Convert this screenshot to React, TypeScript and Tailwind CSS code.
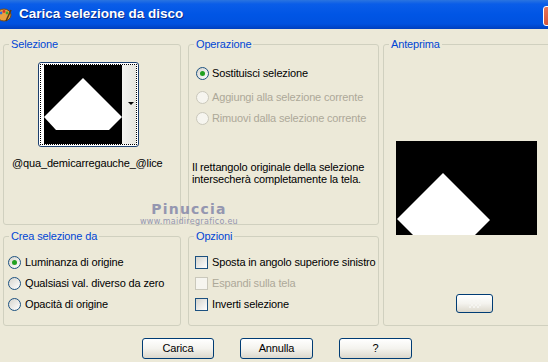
import type { ReactNode } from 'react';

const font = { fontFamily: '"Liberation Sans", Arial, sans-serif' };

function Radio({ checked, disabled }: { checked?: boolean; disabled?: boolean }) {
  return (
    <span
      className={`w-[13px] h-[13px] shrink-0 rounded-full border flex items-center justify-center ${
        disabled
          ? 'border-[#CAC8BB] bg-[#F6F5EF]'
          : 'border-[#1C5180] bg-linear-to-br from-[#D6D5CE] to-white'
      }`}
    >
      {checked && <span className="w-[5px] h-[5px] rounded-full bg-[#21A121]" />}
    </span>
  );
}

function Check({ disabled }: { disabled?: boolean }) {
  return (
    <span
      className={`w-[13px] h-[13px] shrink-0 border ${
        disabled
          ? 'border-[#CAC8BB] bg-[#F6F5EF]'
          : 'border-[#1C5180] bg-linear-to-br from-[#D6D5CE] to-white'
      }`}
    />
  );
}

function Group({ label, className, children }: { label: string; className: string; children?: ReactNode }) {
  return (
    <div className={`relative border border-[#D0D0BF] rounded-[3px] ${className}`}>
      <span className="absolute -top-[8px] left-[5px] px-[2px] bg-[#ECE9D8] text-[#0046D5] text-[11px] leading-[14px] whitespace-nowrap">
        {label}
      </span>
      {children}
    </div>
  );
}

function XpButton({ children, className }: { children?: ReactNode; className: string }) {
  return (
    <button className={`rounded-[3px] border border-[#003C74] bg-linear-to-b from-white via-[#F4F3EE] to-[#DCD8CC] text-[11px] text-black flex items-center justify-center ${className}`}>
      {children}
    </button>
  );
}

export default function App() {
  return (
    <div className="w-[548px] h-[362px] overflow-hidden bg-[#ECE9D8] relative tracking-[-0.15px]" style={font}>
      {/* title bar */}
      <div className="h-[29px] flex items-center overflow-hidden bg-[linear-gradient(180deg,#2A74E0_0%,#0A5DE8_14%,#0055E5_50%,#0052E0_82%,#0040BE_100%)]">
        <svg width="14" height="16" viewBox="0 0 14 16" className="ml-[-2px] shrink-0">
          <ellipse cx="6" cy="8" rx="7" ry="6" fill="#E8A040" stroke="#7A4A10" strokeWidth="1" />
          <circle cx="3" cy="6" r="1.4" fill="#2B6DD8" />
          <circle cx="6" cy="4.5" r="1.4" fill="#D8302B" />
          <circle cx="9" cy="6" r="1.4" fill="#3AA93A" />
          <path d="M8 14 L13 3" stroke="#5A3A10" strokeWidth="1.5" />
        </svg>
        <span
          className="ml-[7px] text-white font-bold text-[13.5px] tracking-[0px] [text-shadow:1px_1px_0_#0A2A8A]"
          style={font}
        >
          Carica selezione da disco
        </span>
        <div className="ml-auto mr-[-17px] w-[22px] h-[20px] mt-[3px] shrink-0 rounded-[3px] border border-white bg-linear-to-br from-[#E8765A] to-[#C4371C] flex items-center justify-center">
          <svg width="10" height="10" viewBox="0 0 10 10">
            <path d="M1 1 L9 9 M9 1 L1 9" stroke="white" strokeWidth="2" />
          </svg>
        </div>
      </div>

      {/* body */}
      <div className="flex pt-[15px] pl-[3px]">
        <div className="grid grid-cols-[178px_191px] grid-rows-[181px_90px] gap-x-[7px] gap-y-[11px] shrink-0">
          <Group label="Selezione" className="">
            <div className="ml-[34px] mt-[17px] w-[101px] h-[85px] rounded-[3px] border border-[#1C3F6E] bg-white p-[1px]">
              <div className="w-full h-full border border-dotted border-black flex items-center pl-[3px]">
                <svg width="78" height="79" viewBox="0 0 78 79" className="bg-black">
                  <polygon points="39,13 0,52 12,65 65,65 78,52" fill="white" />
                </svg>
                <div className="flex-1 h-full bg-linear-to-r from-[#F4F4F0] to-[#E6E6E0] relative">
                  <span className="absolute right-[2px] top-[37px] w-0 h-0 border-l-[3px] border-r-[3px] border-t-[3px] border-l-transparent border-r-transparent border-t-black" />
                </div>
              </div>
            </div>
            <div className="ml-[8px] mt-[10px] text-[11px] leading-[13px] text-black whitespace-nowrap">@qua_demicarregauche_@lice</div>
          </Group>

          <Group label="Operazione" className="">
            <div className="ml-[7px] mt-[22px] flex flex-col text-[11px] leading-[13px] whitespace-nowrap">
              <div className="flex items-center gap-[3px] h-[13px]">
                <Radio checked />
                <span className="text-black">Sostituisci selezione</span>
              </div>
              <div className="flex items-center gap-[3px] h-[13px] mt-[11px]">
                <Radio disabled />
                <span className="text-[#ACA899]">Aggiungi alla selezione corrente</span>
              </div>
              <div className="flex items-center gap-[3px] h-[13px] mt-[8px]">
                <Radio disabled />
                <span className="text-[#ACA899]">Rimuovi dalla selezione corrente</span>
              </div>
            </div>
            <div className="ml-[3px] mt-[36px] text-[11px] leading-[12px] text-black whitespace-nowrap">
              Il rettangolo originale della selezione
              <br />
              intersecherà completamente la tela.
            </div>
          </Group>

          <Group label="Crea selezione da" className="">
            <div className="ml-[4px] mt-[19px] flex flex-col gap-[8px] text-[11px] leading-[13px] text-black whitespace-nowrap">
              <div className="flex items-center gap-[4px] h-[13px]">
                <Radio checked />
                <span>Luminanza di origine</span>
              </div>
              <div className="flex items-center gap-[4px] h-[13px]">
                <Radio />
                <span>Qualsiasi val. diverso da zero</span>
              </div>
              <div className="flex items-center gap-[4px] h-[13px]">
                <Radio />
                <span>Opacità di origine</span>
              </div>
            </div>
          </Group>

          <Group label="Opzioni" className="">
            <div className="ml-[6px] mt-[19px] flex flex-col gap-[8px] text-[11px] leading-[13px] whitespace-nowrap">
              <div className="flex items-center gap-[4px] h-[13px]">
                <Check />
                <span className="text-black">Sposta in angolo superiore sinistro</span>
              </div>
              <div className="flex items-center gap-[4px] h-[13px]">
                <Check disabled />
                <span className="text-[#ACA899]">Espandi sulla tela</span>
              </div>
              <div className="flex items-center gap-[4px] h-[13px]">
                <Check />
                <span className="text-black">Inverti selezione</span>
              </div>
            </div>
          </Group>
        </div>

        <Group label="Anteprima" className="ml-[4px] w-[180px] h-[282px] shrink-0">
          <svg width="141" height="94" viewBox="0 0 141 94" className="ml-[12px] mt-[96px] bg-black block">
            <polygon points="47,32 1,78 17,94 79,94 94,79" fill="white" />
          </svg>
          <XpButton className="ml-[72px] mt-[59px] w-[37px] h-[19px]">
            <span className="w-[12px] h-[8px] bg-[linear-gradient(45deg,#F6F6F2_25%,transparent_25%,transparent_75%,#F6F6F2_75%),linear-gradient(45deg,#F6F6F2_25%,transparent_25%,transparent_75%,#F6F6F2_75%)] bg-[length:4px_4px] [background-position:0_0,2px_2px] opacity-90" />
          </XpButton>
        </Group>
      </div>

      {/* buttons */}
      <div className="flex gap-[26px] pl-[142px] mt-[12px]">
        <XpButton className="w-[72px] h-[21px]">Carica</XpButton>
        <XpButton className="w-[73px] h-[21px]">Annulla</XpButton>
        <XpButton className="w-[73px] h-[21px]">?</XpButton>
      </div>

      {/* watermark */}
      <div className="absolute left-[143px] top-[202px] w-[92px] flex flex-col items-center text-[#9496B0] pointer-events-none">
        <span className="text-[14px] leading-[15px] font-semibold tracking-[1.2px]" style={{ fontFamily: '"DejaVu Sans", sans-serif' }}>
          Pinuccia
        </span>
        <span className="text-[8px] leading-[9px] tracking-[0.3px]" style={{ fontFamily: '"DejaVu Sans", sans-serif' }}>
          www.maidiregrafico.eu
        </span>
      </div>
    </div>
  );
}
